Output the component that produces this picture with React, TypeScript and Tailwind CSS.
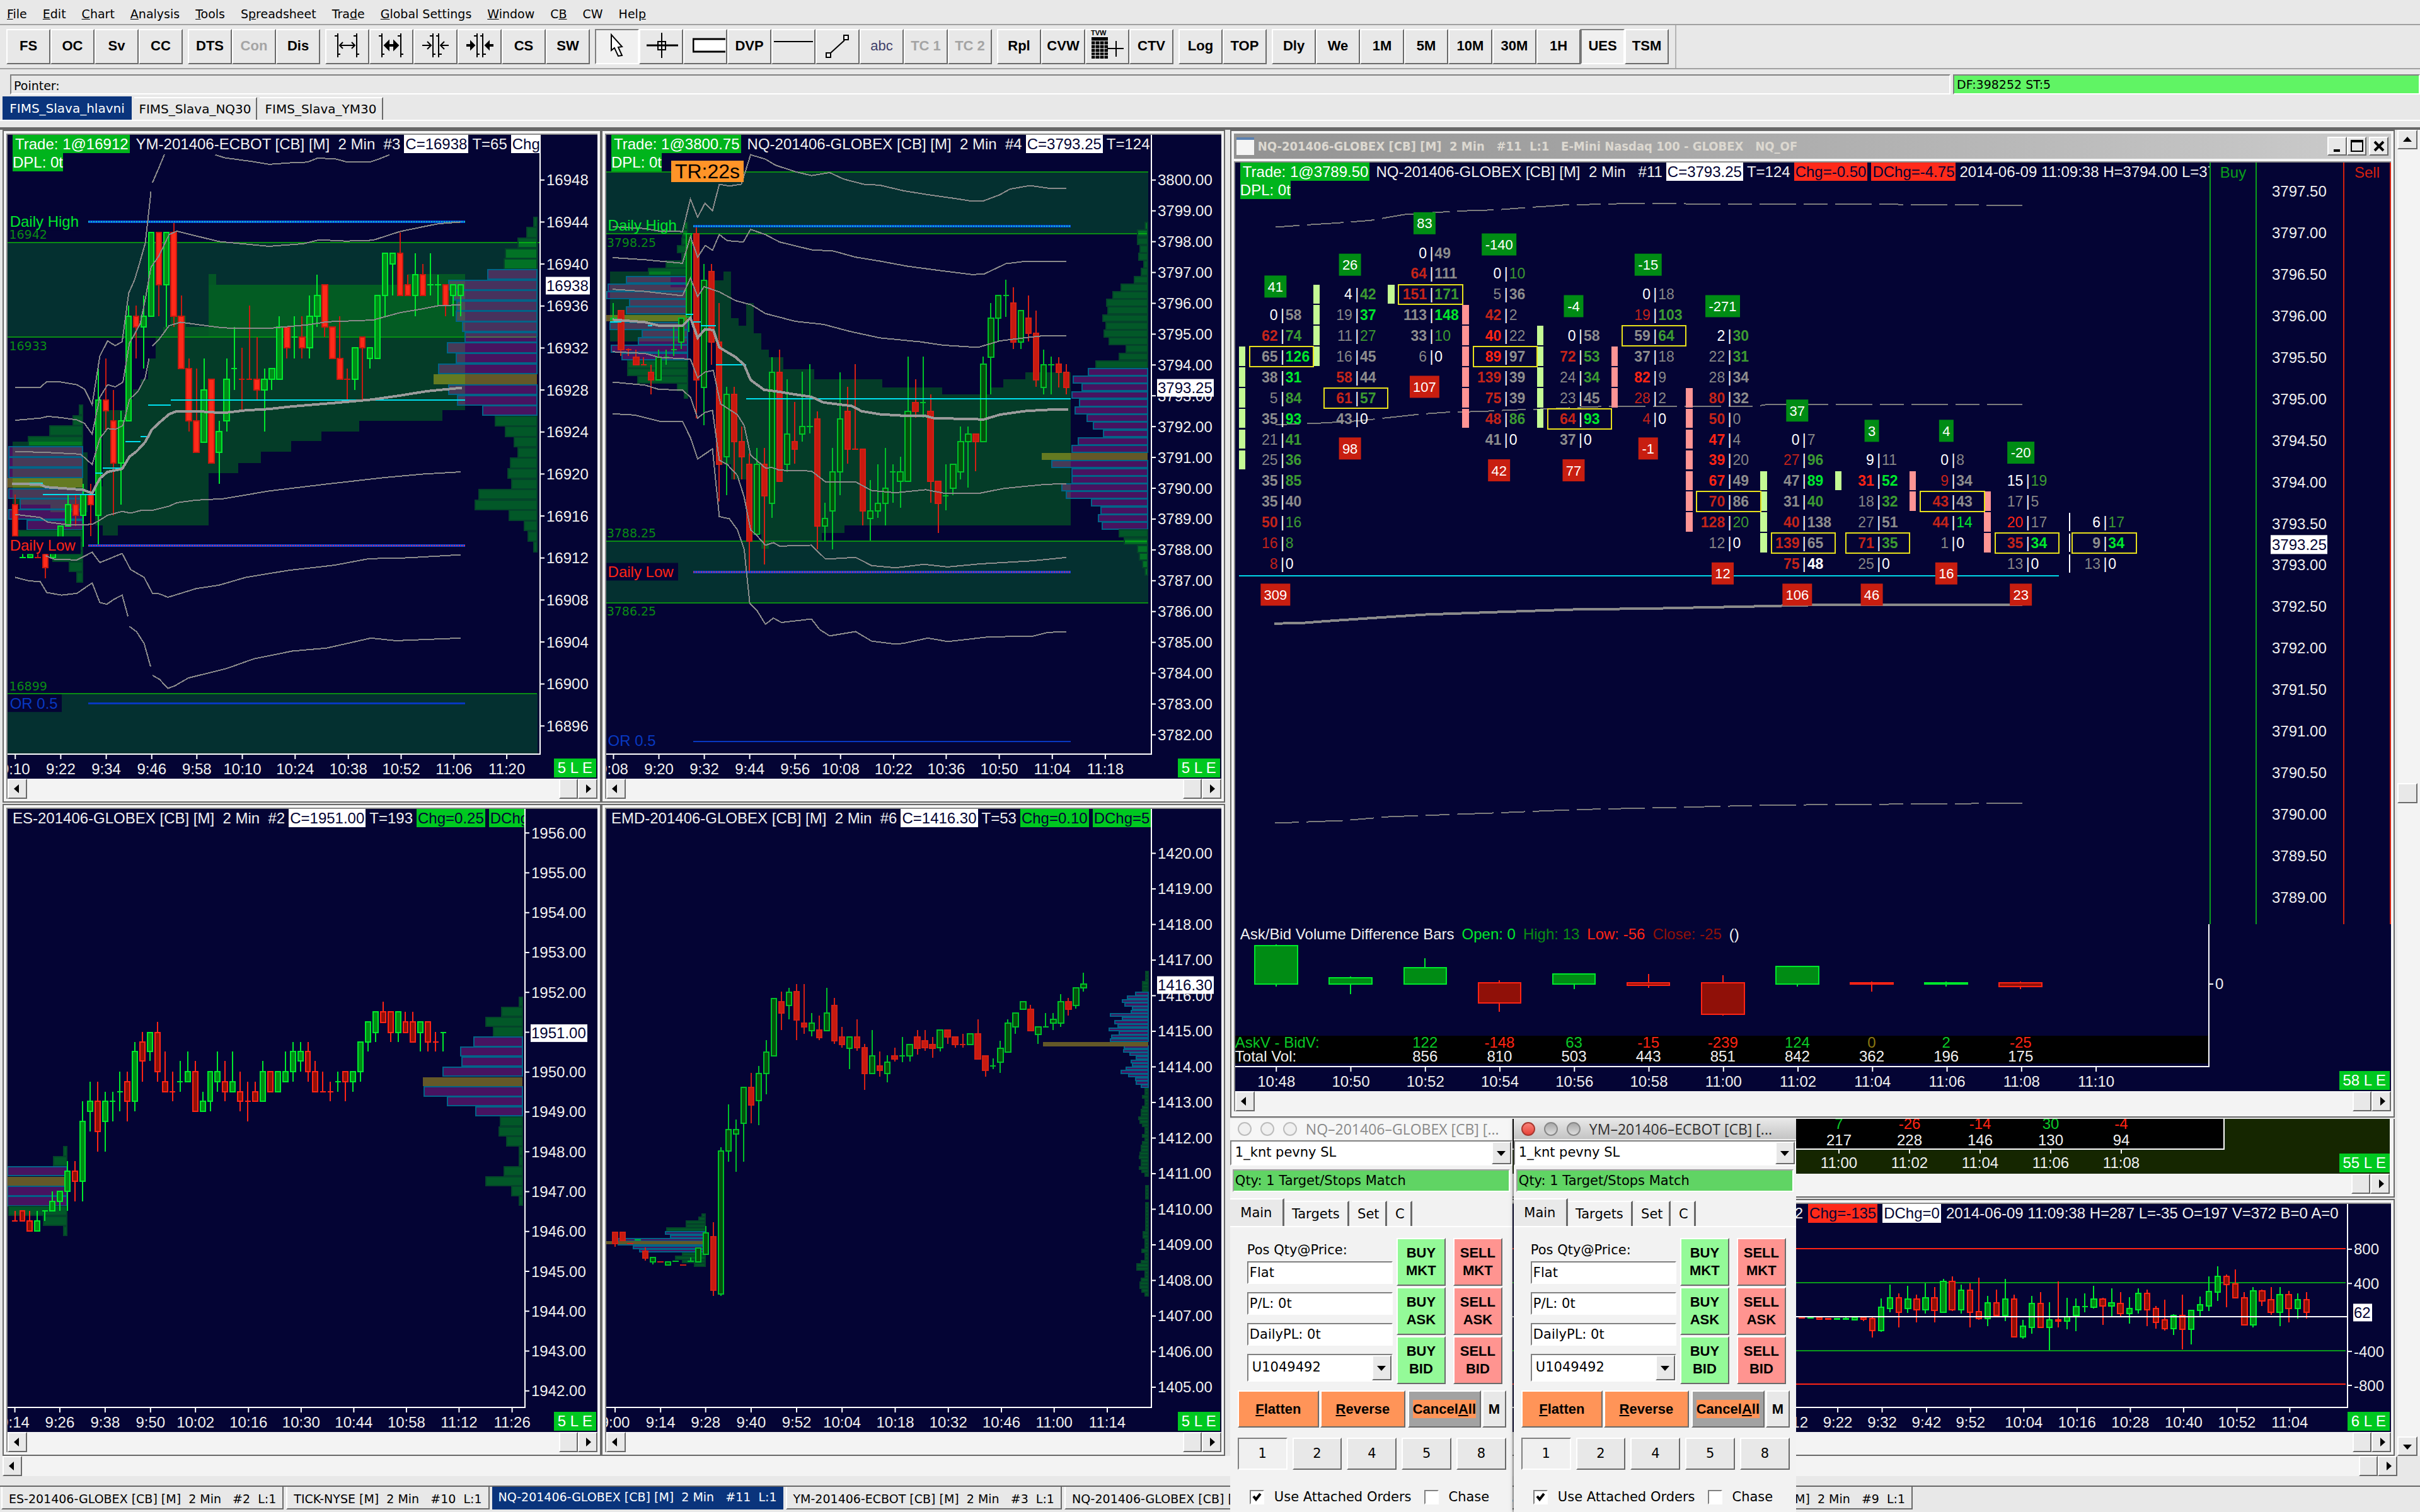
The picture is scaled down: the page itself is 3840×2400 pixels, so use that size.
import type { ReactNode } from "react";

type Box = [number, number, number, number];
type Candle = { dir: string; high: number; top: number; bottom: number; low: number };
type Label = [string, number];

const bevel = "border-2 border-t-white border-l-white border-r-[#6a6a6a] border-b-[#6a6a6a] bg-[#e8e8e8]";
const sunken = "border-2 border-t-[#808080] border-l-[#808080] border-r-white border-b-white";

const themes = {
	bright: { upFill: "#008c18", up: "#00e82c", downFill: "#ff2a1a", down: "#c81a10" },
	dark: { upFill: "#04500c", up: "#00c028", downFill: "#c81a10", down: "#d42014" },
	deep: { upFill: "#008c14", up: "#00e82c", downFill: "#901008", down: "#ff2414" },
};

function parse(data: string): Candle[] {
	return data
		.trim()
		.split(/[;\n]+/)
		.map((row) => {
			const [dir, high, top, bottom, low] = row.trim().split(/\s+/);
			return { dir, high: +high, top: +top, bottom: +bottom, low: +low };
		});
}

const series = (first: number, step: number, start: number, gap: number, count: number, digits: number): Label[] =>
	Array.from({ length: count }, (_, i) => [(first - i * step).toFixed(digits), start + i * gap]);

const pct = (v: number, start: number, span: number) => `${(((v - start) / span) * 100).toFixed(3)}%`;

/* ---------- data ---------- */

const ymCandles = parse(`d 18 17 14 14; u 13 12 12 12; u 13 12.3 12 12; d 13 12 12 12; d 12.4 12.4 11 10; u 13 12.4 12 12
u 15 15 13 13; u 18 17 15 15; d 18 17 16 15; u 19 18 16 13; d 19 18 17 14; u 30 27 16 13; d 31 27 26 24; d 28 25 21 16
u 26 25 21 17; u 36 35 25 25; d 36 35 34 31; u 37 35 34 30; u 43 43 35 35; d 43 43 38 35; u 43 43 38 34; d 44 43 35 34
d 37 35 30 30; d 31 30 25 24; d 30 25 22 22; u 31 28 23 23; d 29 29 21 21; u 25 24 22 19; u 31 29 25 24; u 34 30 30 28
d 32 29 29 26; d 36 29 29 29; d 33 29 28 27; u 30 29 28 24; u 30 30 29 28; u 35 34 29 29; d 34 34 32 31; u 35 33 33 31
d 35 33 32 31; u 37 35 32 31; u 39 37 35 34; d 38 38 34 33; d 34 34 31 31; d 35 31 29 29; d 30 29 29 27; u 32 32 29 28
d 33 33 32 27; u 32 32 31 30; u 37 37 31 31; u 41 41 37 35; u 41 41 40 37; d 43 41 37 37; d 39 38 37 37; u 41 39 37 35
d 40 39 37 37; u 41 38 38 37; u 39 38 38 36; d 38 38 36 35; u 38 38 37 35; u 38 38 37 35`);

const nqCandles = parse(`u 407 442 446 446; d 425 425 515 530; d 513 515 515 530; d 515 532 550 550; d 533 550 550 552
d 550 567 585 618; u 515 532 585 585; u 515 532 532 550; u 462 515 515 530; u 442 442 498 514; u 248 248 440 475
d 230 248 585 673; u 317 355 602 690; d 317 335 498 550; d 407 498 780 865; u 601 619 762 850; d 601 619 727 815
d 692 727 762 815; d 755 780 956 1027; u 742 780 940 940; d 742 780 852 1010; u 532 567 869 903; d 515 567 818 818
u 584 710 780 797; d 636 727 745 778; u 566 692 710 727; u 549 692 692 709; d 657 675 922 975; u 868 905 922 955
u 742 797 887 975; u 567 675 797 850; d 601 657 745 778; d 549 745 745 746; d 745 745 887 920; u 816 887 905 955
u 780 869 887 903; u 742 834 869 920; u 780 797 797 868; u 762 797 818 880; u 531 657 818 818; d 584 637 657 672
u 531 637 637 672; d 619 657 818 868; d 818 818 869 938; u 780 852 852 885; u 780 780 834 850; u 692 727 797 815
u 692 710 727 833; d 710 710 727 796; u 531 549 727 727; u 407 442 532 618; u 390 390 442 498; u 354 390 390 440
d 372 407 498 514; u 425 425 498 514; d 390 442 478 497; d 425 478 585 601; u 515 550 602 618; u 531 550 550 618
d 532 549 567 602; d 549 567 602 618`);

const esCandles = parse(`d 906 928 928 928; d 906 906 928 928; d 906 928 950 950; u 906 928 950 950; u 906 906 906 928
u 862 884 906 906; u 862 862 884 906; u 796 818 862 906; d 796 818 840 884; u 664 708 840 884; u 620 664 686 730
d 620 664 730 774; u 642 664 708 774; u 642 664 664 708; u 598 642 642 686; d 598 620 664 708; u 532 553 664 686
d 510 532 575 620; u 512 512 553 575; d 488 512 598 620; d 553 620 642 642; d 598 642 642 664; u 575 620 620 642
u 553 598 620 620; d 575 598 686 686; u 642 664 686 686; u 598 598 664 686; u 553 598 620 642; d 575 620 642 664
u 553 620 642 642; d 598 642 664 686; d 620 664 664 708; d 620 642 664 664; u 575 598 664 664; d 598 598 642 642
u 598 598 642 642; u 553 598 620 620; u 532 553 598 620; u 532 553 575 598; d 532 553 598 620; d 575 598 642 642
d 598 642 642 642; d 620 642 642 664; u 598 620 620 642; d 598 598 620 664; u 598 598 620 642; u 532 532 598 620
u 488 488 532 553; u 466 466 512 532; d 444 466 490 490; d 466 466 512 532; u 466 466 512 532; d 466 488 512 512
d 466 488 532 532; u 488 488 512 553; d 488 488 532 553; d 510 532 532 553; u 511 512 512 553`);

const emdCandles = parse(`d 955 955 980 987; d 955 955 973 973; d 980 980 980 980; u 972 972 972 972; d 988 997 1012 1018
u 1010 1011 1020 1026; d 1020 1020 1020 1020; u 1019 1020 1028 1028; u 1019 1019 1019 1019; d 1028 1028 1028 1028
u 1010 1019 1019 1020; u 988 989 1020 1020; u 941 956 1003 1003; d 933 964 1083 1095; u 766 775 1091 1095
u 672 728 775 798; u 705 728 737 821; u 634 634 714 798; d 602 634 673 713; u 587 603 664 718; u 530 556 603 649
u 437 437 564 564; d 422 445 470 507; u 414 423 453 483; d 405 422 485 530; d 405 492 500 516; u 470 492 509 521
d 475 508 524 530; u 414 470 509 509; d 436 453 531 538; d 500 523 540 547; u 523 523 548 594; d 483 523 547 554
d 538 547 603 640; u 508 564 603 603; d 555 587 596 610; u 563 578 603 623; d 547 564 571 577; u 523 564 564 578
u 538 540 564 577; d 508 523 548 562; d 508 531 547 554; d 523 540 548 569; u 508 508 547 555; d 508 508 523 538
d 523 523 540 547; d 516 539 539 546; u 516 516 540 540; d 484 516 571 571; d 564 564 596 610; u 570 587 587 594
u 531 548 578 602; u 484 492 556 556; u 470 470 500 516; u 445 445 462 462; d 452 462 509 509; u 500 500 517 538
u 470 500 500 500; u 470 484 492 507; u 428 445 492 500; d 436 445 461 475; u 414 414 453 460; u 380 406 414 422`);

const tickCandles = parse(`u 808 808 811 811; d 808 809 811 811; u 808 808 810 810; d 808 808 816 816; d 814 814 816 816
u 814 814 816 816; u 808 814 816 818; u 808 808 817 817; d 806 808 816 823; d 806 813 861 886; u 735 770 861 866
u 681 731 773 788; d 715 731 788 847; u 686 736 773 792; d 720 736 778 827; u 675 731 778 793; d 691 731 782 827
u 657 667 788 788; d 647 667 778 783; u 681 702 778 793; d 675 702 788 847; d 652 785 812 817; u 725 751 812 842
d 701 751 801 806; u 657 736 801 822; d 720 736 885 885; u 818 844 885 891; u 725 755 847 872; d 710 755 847 847
u 750 819 847 937; d 667 819 822 847; u 731 806 822 856; u 735 766 801 862; u 715 766 766 788; u 686 736 768 773
d 731 736 763 838; u 696 751 763 803; d 710 755 793 803; u 730 774 793 833; u 696 715 778 793; d 701 715 778 842
d 764 774 827 852; d 740 818 852 861; u 795 800 852 877; d 720 800 856 935; u 780 780 856 915; u 726 760 782 805
u 647 707 763 783; u 608 648 710 745; d 642 648 680 769; d 622 677 733 733; d 710 731 837 837; u 691 706 837 847
d 701 706 744 763; d 691 740 788 798; u 691 720 788 842; d 706 720 773 827; u 715 740 773 812; d 710 740 788 812`);

const deltaBars = parse(`u 174 180 366 378; u 330 336 366 414; u 240 288 366 366; d 348 360 456 498; u 318 318 366 390
d 318 360 372 384; d 324 360 510 516; u 276 282 366 378; d 354 360 366 402; u 354 360 366 378; d 354 360 378 390`);

/* bid and ask volume per price; the letter after a number picks its tone */
const footprint = [
	{ start: 6, box: 8, top: ["41", 495], bottom: ["309", 1454], rows: "0w 58G,62R 74E,65G 126B,38G 31B,5g 84E,35G 93B,21g 41E,25g 36E,35G 85E,35G 40G,50R 16e,16r 8e,8r 0w" },
	{ start: 5, box: 10, top: ["26", 427], bottom: ["98", 999], rows: "4w 42E,19g 37B,11g 27e,16g 45G,58R 44G,61R 57E,43G 0w" },
	{ start: 3, box: 5, top: ["83", 298], bottom: ["107", 807], rows: "0w 49G,64R 111G,151R 171E,113G 148B,33G 10e,6g 0w" },
	{ start: 4, box: 8, top: ["-140", 364], bottom: ["42", 1067], rows: "0w 10e,5g 36G,42R 2g,40X 22g,89X 97G,139R 39G,75R 39G,48R 86E,41G 0w" },
	{ start: 7, box: 11, top: ["-4", 556], bottom: ["77", 1067], rows: "0w 58G,72R 53E,24g 34E,23g 45G,64R 93B,37G 0w" },
	{ start: 5, box: 7, top: ["-15", 427], bottom: ["-1", 999], rows: "0w 18g,19r 103E,59G 64E,37G 18g,82X 9g,28r 2g,4r 0w" },
	{ start: 7, box: 15, top: ["-271", 556], bottom: ["12", 1388], rows: "2w 30E,22g 31E,28g 34G,80R 32G,50R 0g,47X 4g,39X 20g,67X 49G,70R 86G,128R 20e,12g 0w" },
	{ start: 12, box: 17, top: ["37", 881], bottom: ["106", 1454], rows: "0w 7g,27r 96E,47G 89B,31G 40E,40R 138G,139R 65G,75R 48W" },
	{ start: 13, box: 17, top: ["3", 944], bottom: ["46", 1454], rows: "9w 11g,31X 52B,18g 32E,27g 51G,71R 35E,25g 0w" },
	{ start: 13, box: 15, top: ["4", 944], bottom: ["16", 1388], rows: "0w 8g,9r 34G,43R 43G,44R 14b,1g 0w" },
	{ start: 14, box: 17, top: ["-20", 1012], bottom: ["23", 1454], rows: "15w 19e,17g 5g,20x 17g,35R 34B,13g 0w" },
	{ start: 16, box: 17, top: null, bottom: null, rows: "6w 17e,9G 34B,13g 0w" },
] as { start: number; box: number; top: Label | null; bottom: Label | null; rows: string }[];

const toneFill: Record<string, string> = {
	w: "#ffffff", W: "#ffffff", g: "#868686", G: "#8c8c8c", r: "#c0221a", R: "#c4241a",
	x: "#ff2414", X: "#ff2414", e: "#3c9a32", E: "#3c9a32", b: "#00e82c", B: "#00e82c",
};

/* first row, last row, colour of the strip left of each footprint column */
const strips: [number, number, string][] = [
	[8, 13, "#c4fa94"], [5, 8, "#c4fa94"], [5, 5, "#c4fa94"], [6, 11, "#ff9494"], [7, 11, "#c4fa94"], [8, 10, "#ff9494"],
	[10, 16, "#ff9494"], [14, 17, "#c4fa94"], [14, 14, "#c4fa94"], [14, 15, "#ff9494"], [15, 17, "#ff9494"],
];

/* ---------- chart pieces ---------- */

function Candles({ data, x0, dx, width, theme, y = (v) => v }: {
	data: Candle[];
	x0: number;
	dx: number;
	width: number;
	theme: keyof typeof themes;
	y?: (v: number) => number;
}) {
	const t = themes[theme];
	return (
		<g>
			{data.map((c, i) => {
				const x = x0 + dx * i;
				const stroke = c.dir === "u" ? t.up : t.down;
				const h = y(c.bottom) - y(c.top);
				return (
					<g key={i} stroke={stroke} strokeWidth="2">
						<line x1={x} x2={x} y1={y(c.high)} y2={y(c.low)} vectorEffect="non-scaling-stroke" />
						{h < 1 ? (
							<line x1={x - width / 2 - 1} x2={x + width / 2 + 1} y1={y(c.top)} y2={y(c.top)} vectorEffect="non-scaling-stroke" />
						) : (
							<rect x={x - width / 2} y={y(c.top)} width={width} height={h} fill={c.dir === "u" ? t.upFill : t.downFill} vectorEffect="non-scaling-stroke" />
						)}
					</g>
				);
			})}
		</g>
	);
}

/* rows are left edges; p = value area, o = point of control, g = outside */
function Profile({ rows, right, y0, dy }: { rows: string; right: number; y0: number; dy: number }) {
	const paint: Record<string, [string, number, string]> = {
		p: ["#e639c6", 0.3, "#006488"],
		o: ["#f4d616", 0.4, "none"],
		g: ["#00d616", 0.4, "#04442a"],
	};
	return (
		<g>
			{rows.split(" ").map((row, i) => {
				const [fill, alpha, stroke] = paint[row[0]];
				const left = +row.slice(1);
				return (
					<rect key={i} x={left} y={y0 + dy * i - dy / 2 + 1} width={right - left} height={dy - 2} fill={fill} fillOpacity={alpha} stroke={stroke} strokeWidth="2" vectorEffect="non-scaling-stroke" />
				);
			})}
		</g>
	);
}

function Lines({ paths, stroke, width = 2, dash }: { paths: string[]; stroke: string; width?: number; dash?: string }) {
	return (
		<g fill="none" stroke={stroke} strokeWidth={width} strokeDasharray={dash}>
			{paths.map((p) => (
				<polyline key={p} points={p} vectorEffect="non-scaling-stroke" />
			))}
		</g>
	);
}

function DayLine({ x1, x2, y, dots }: { x1: number; x2: number; y: number; dots: string }) {
	return (
		<g>
			<Lines paths={[`${x1},${y} ${x2},${y}`]} stroke="#0848e0" width={4} />
			<Lines paths={[`${x1},${y} ${x2},${y}`]} stroke={dots} width={2} dash="2 2" />
		</g>
	);
}

function Drawing({ box, children }: { box: Box; children: ReactNode }) {
	return (
		<svg className="absolute inset-0 h-full w-full" viewBox={box.join(" ")} preserveAspectRatio="none" shapeRendering="crispEdges">
			{children}
		</svg>
	);
}

function Note({ box, x, y, color, text, small, back }: { box: Box; x: number; y: number; color: string; text: string; small?: boolean; back?: number }) {
	const top = pct(y, box[1], box[3]);
	return (
		<g>
			{back && <rect x="0" y={top} width={back} height="28" fill="#040434" className="-translate-y-3.5" />}
			<text x={pct(x, box[0], box[2])} y={top} fill={color} dominantBaseline="central" className={small ? "font-['DejaVu_Sans',sans-serif] text-[19px]" : "text-2xl"}>
				{text}
			</text>
		</g>
	);
}

function PriceAxis({ box, labels, last, className }: { box: Box; labels: Label[]; last?: Label; className: string }) {
	return (
		<svg className={`h-full shrink-0 ${className}`}>
			{labels.map(([text, y]) => (
				<g key={text}>
					<line x1="0" x2="6" y1={pct(y, box[1], box[3])} y2={pct(y, box[1], box[3])} stroke="#fff" strokeWidth="2" />
					<text x="9" y={pct(y, box[1], box[3])} fill="#f0f0f0" dominantBaseline="central" className="text-2xl">
						{text}
					</text>
				</g>
			))}
			{last && (
				<g>
					<rect x="8" y={pct(last[1], box[1], box[3])} width={last[0].length === 5 ? 70 : last[0].length < 4 ? 30 : 90} height="28" fill="#fff" className="-translate-y-3.5" />
					<text x="9" y={pct(last[1], box[1], box[3])} fill="#040434" dominantBaseline="central" className="text-2xl">
						{last[0]}
					</text>
				</g>
			)}
		</svg>
	);
}

function TimeAxis({ box, labels, badge, axis }: { box: Box; labels: Label[]; badge: string; axis: string }) {
	return (
		<div className="relative flex h-[38px] shrink-0 overflow-hidden">
			<svg className="h-full min-w-0 flex-1 overflow-visible">
				{labels.map(([text, x]) => (
					<g key={text}>
						<line x1={pct(x, box[0], box[2])} x2={pct(x, box[0], box[2])} y1="0" y2="7" stroke="#fff" strokeWidth="2" />
						<text x={pct(x, box[0], box[2])} y="22" fill="#f0f0f0" textAnchor="middle" dominantBaseline="central" className="text-2xl">
							{text}
						</text>
					</g>
				))}
			</svg>
			<div className={`flex shrink-0 items-center justify-end pr-0.5 pt-1 ${axis}`}>
				<span className="z-10 bg-[#00c820] px-1.5 text-2xl leading-[30px] whitespace-nowrap text-white">{badge}</span>
			</div>
		</div>
	);
}

function Arrow({ dir }: { dir: "left" | "right" | "up" | "down" }) {
	const d = { left: "M9 0 L1 7 L9 14 Z", right: "M5 0 L13 7 L5 14 Z", up: "M0 10 L7 2 L14 10 Z", down: "M0 4 L7 12 L14 4 Z" }[dir];
	return (
		<svg width="14" height="14" className="m-auto">
			<path d={d} fill="#000" />
		</svg>
	);
}

function HScroll() {
	return (
		<div className="flex h-8 shrink-0 bg-[#f3f3f3]">
			<button aria-label="Scroll left" className={`w-[31px] ${bevel}`}><Arrow dir="left" /></button>
			<div className="flex-1" />
			<div className={`w-[30px] ${bevel}`} />
			<button aria-label="Scroll right" className={`w-[31px] ${bevel}`}><Arrow dir="right" /></button>
		</div>
	);
}

function Frame({ title, children }: { title?: ReactNode; children: ReactNode }) {
	return (
		<section className={`flex min-h-0 min-w-0 flex-col overflow-hidden border-2 border-[#686868] bg-[#f4f4f4] px-1 pt-1 ${title ? "pb-2" : "pb-1"}`}>
			{title}
			<div className="flex min-h-0 flex-1 flex-col border-t-2 border-l-2 border-[#8a8a8a]">{children}</div>
		</section>
	);
}

function Chip({ tone, children }: { tone: string; children: ReactNode }) {
	return <span className={`shrink-0 px-0.5 ${tone}`}>{children}</span>;
}

const green = "bg-[#00b41c] text-white";
const lime = "bg-[#00c820] text-[#040434]";
const white = "bg-white text-[#040434]";
const red = "bg-[#ff2a1a] text-[#040434]";

function ChartHead({ trade, children }: { trade?: string; children: ReactNode }) {
	return (
		<div className="absolute inset-x-0 top-0 overflow-hidden text-2xl leading-[29px] whitespace-pre text-[#f0f0f0]">
			<div className="flex gap-1.5 bg-[#040434] pl-2">
				{trade && <span className={`mr-1 shrink-0 pr-0.5 pl-1 ${green}`}>{trade}</span>}
				{children}
			</div>
			{trade && <span className={`ml-2 inline-block ${green}`}>DPL: 0t</span>}
		</div>
	);
}

function Chart({ box, head, drawing, notes, prices, last, times, badge, axis, children }: {
	box: Box;
	head: ReactNode;
	drawing: ReactNode;
	notes?: ReactNode;
	prices: Label[];
	last: Label;
	times: Label[];
	badge: string;
	axis: string;
	children?: ReactNode;
}) {
	return (
		<Frame>
			<div className="flex min-h-0 flex-1 flex-col bg-[#040434]">
				<div className="flex min-h-0 flex-1">
					<div className="relative min-w-0 flex-1 border-r-2 border-b-2 border-white">
						<Drawing box={box}>{drawing}</Drawing>
						<svg className="absolute inset-0 h-full w-full">{notes}</svg>
						{head}
						{children}
					</div>
					<PriceAxis box={box} labels={prices} last={last} className={axis} />
				</div>
				<TimeAxis box={box} labels={times} badge={badge} axis={axis} />
			</div>
			<HScroll />
		</Frame>
	);
}

/* ---------- the four charts on the left ---------- */

function YmChart() {
	const box: Box = [20, 20, 1383, 1426];
	return (
		<Chart
			box={box}
			axis="w-[90px]"
			badge="5 L E"
			prices={series(16948, 4, 124, 96.6, 14, 0)}
			last={["16938", 367]}
			times={[["9:10", 40], ["9:22", 158], ["9:34", 276], ["9:46", 394], ["9:58", 511], ["10:10", 629], ["10:24", 766], ["10:38", 904], ["10:52", 1041], ["11:06", 1178], ["11:20", 1315]]}
			head={
				<ChartHead trade="Trade: 1@16912">
					<span>YM-201406-ECBOT [CB] [M]  2 Min  #3</span>
					<Chip tone={white}>C=16938</Chip>
					<span>T=65</span>
					<Chip tone={white}>Chg</Chip>
				</ChartHead>
			}
			drawing={
				<>
					<rect x="20" y="268" width="1380" height="218" fill="#043030" />
					<rect x="20" y="1308" width="1378" height="140" fill="#043030" />
					<Lines paths={["20,268 1403,268", "20,486 1397,486", "20,1308 1397,1308"]} stroke="#0a8c14" />
					<g fill="#049016" fillOpacity="0.4">
						<path d="M33 727H215V752H228V890H131V872H33Z" />
						<path d="M248 830H268V655H327V630H346V607H366V583H386V535H405V487H425V463H444V437H483V463H542V341H562V366H1060V341H1209V654H1150V679H934V704H836V726H757V750H679V776H620V800H542V920H307V944H268V920H248Z" />
						<path d="M542 366H1209V487H542Z" fillOpacity="0.1" />
					</g>
					<Profile rows="g207 g190 g129 g74 p24 p24 p24 o20 p24 p52 p24 p70 g50 g60 g138 g181 g200" right={215} y0={654} dy={24.1} />
					<Profile rows="g1389 g1370 g1348 g1314 g1311 p1268 p1167 p1180 p1189 p1187 p1203 p1210 p1164 p1187 p1141 o1128 p1167 p1190 p1255 g1288 g1315 g1338 g1348 g1328 g1321 g1331 g1246 g1236 g1324 g1364 g1373 g1389" right={1397} y0={221} dy={24.15} />
					<Candles data={ymCandles} x0={40} dx={19.63} width={14} theme="bright" y={(v) => 221 + (44 - v) * 24.15} />
					<DayLine x1={229} x2={1209} y={221} dots="#10d0b0" />
					<DayLine x1={229} x2={1209} y={967} dots="#e02850" />
					<Lines paths={["229,1331 1209,1331"]} stroke="#0838c0" width={3} />
					<Lines stroke="#00e0f0" width={2} paths={["32,823 111,823", "111,849 248,849", "248,800 268,800", "268,788 318,788", "327,727 366,727", "366,715 385,715", "385,643 444,643", "444,631 1209,631"]} />
					<Lines
						stroke="#8a8a8a"
						paths={[
							"40,602 105,602 122,589 160,590 200,596 220,606 240,642 260,530 280,495 300,506 318,497 335,385 350,355 362,320 378,270 385,215 393,150",
							"397,130 413,97 428,65",
							"560,66 585,73 660,82 700,88 765,84 800,83 825,74 870,75 900,82 965,82 985,76 1013,66",
							"40,678 105,673 125,669 160,672 200,677 220,685 240,710 260,625 280,596 300,601 320,590 337,500 350,480 365,455 378,400 393,325 413,300 440,250 460,242 510,253 570,266 700,277 790,271 830,262 900,265 970,263 1040,243 1100,232 1140,225 1198,221",
							"40,750 120,752 210,756 240,780 260,720 280,697 300,699 320,690 337,630 360,610 378,580 388,535",
							"397,507 415,490 440,460 470,452 520,458 580,465 700,466 800,458 850,451 970,447 1040,430 1100,421 1140,414 1198,412",
							"40,895 105,902 125,913 180,919 240,918 260,908 280,897 318,888 340,892 370,885 395,886 440,876 460,868 510,862 580,859 700,841 850,825 1000,810 1100,802 1198,797",
							"119,990 140,998 200,1000 240,982 260,1006 318,985 340,1022 375,1040 397,1077 415,1078 437,1086 510,1066 570,1058 640,1040 750,1024 870,1012 960,997 1060,995 1198,988",
							"40,1040 75,1048 105,1050 122,1075 160,1081 200,1077 240,1053 260,1098 278,1102 298,1090 318,1081 333,1130",
							"337,1153 355,1165 375,1192 392,1246",
							"397,1266 415,1275 437,1296 455,1290 490,1272 590,1250 660,1228 760,1210 850,1203 965,1180 1030,1186 1198,1180",
						]}
					/>
					<Lines stroke="#9a9a9a" width={4} paths={["32,824 105,826 120,832 215,838 240,846 260,812 280,797 318,790 337,762 355,750 378,728 395,700 410,687 440,664 460,657 510,657 580,661 640,655 700,652 760,646 870,638 970,630 1040,621 1110,611 1202,603"]} />
				</>
			}
			notes={
				<>
					<Note box={box} x={24} y={250} color="#0a8c14" text="16942" small />
					<Note box={box} x={24} y={506} color="#0a8c14" text="16933" small />
					<Note box={box} x={24} y={1290} color="#0a8c14" text="16899" small />
					<Note box={box} x={26} y={219} color="#00e82c" text="Daily High" back={116} />
					<Note box={box} x={26} y={966} color="#ff2414" text="Daily Low" back={116} />
					<Note box={box} x={26} y={1330} color="#0838c0" text="OR 0.5" back={86} />
				</>
			}
		/>
	);
}

function NqChart() {
	const box: Box = [18, 20, 1358, 1426];
	return (
		<Chart
			box={box}
			axis="w-[110px]"
			badge="5 L E"
			prices={series(3800, 1, 124, 70.9, 19, 2)}
			last={["3793.25", 602]}
			times={[["9:08", 36], ["9:20", 149], ["9:32", 262], ["9:44", 375], ["9:56", 488], ["10:08", 601], ["10:22", 733], ["10:36", 864], ["10:50", 996], ["11:04", 1128], ["11:18", 1260]]}
			head={
				<ChartHead trade="Trade: 1@3800.75">
					<span>NQ-201406-GLOBEX [CB] [M]  2 Min  #4</span>
					<Chip tone={white}>C=3793.25</Chip>
					<span>T=124</span>
				</ChartHead>
			}
			drawing={
				<>
					<rect x="18" y="106" width="1352" height="142" fill="#043030" />
					<rect x="18" y="956" width="1352" height="143" fill="#043030" />
					<Lines paths={["18,106 1370,106", "18,248 1370,248", "18,956 1370,956", "18,1099 1370,1099"]} stroke="#0a8c14" />
					<g fill="#049016" fillOpacity="0.4">
						<path d="M28 335H178V372H221V497H28Z" />
						<path d="M254 355H310V335H329V442H348V460H367V407H386V478H404V515H423V532H460V560H536V584H706V602H856V619H977V602H1008V584H1064V567H1176V920H612V938H555V956H423V974H404V940H367V815H329V780H300V498H254Z" />
					</g>
					<Profile rows="g213 g208 g207 g196 g206 g168 g124 p69 p22 p20 p76 p69 o18 p28 p108 p98 p30 p57 g71 g71 g96 g196 g213" right={221} y0={230} dy={17.72} />
					<Profile rows="g1362 g1343 g1343 g1349 g1347 g1359 g1353 g1335 g1302 g1282 g1266 g1270 g1256 g1265 g1260 g1272 g1315 g1297 g1240 p1221 p1183 p1205 p1180 p1199 p1187 p1218 p1233 p1258 p1195 p1180 o1104 p1130 p1180 p1180 p1155 p1165 p1228 p1252 p1246 p1255 g1297 g1310 g1343 g1348 g1356 g1362" right={1369} y0={230} dy={17.72} />
					<Candles data={nqCandles} x0={36} dx={18.83} width={13} theme="dark" />
					<DayLine x1={235} x2={1176} y={230} dots="#10d0b0" />
					<DayLine x1={235} x2={1176} y={1028} dots="#e02850" />
					<Lines paths={["235,1418 1176,1418"]} stroke="#0838c0" />
					<Lines stroke="#00e0f0" paths={["28,451 56,451", "122,460 132,460", "216,434 235,434", "235,451 254,451", "254,460 292,460", "292,550 367,550", "367,628 1176,628"]} />
					<Lines
						stroke="#8a8a8a"
						paths={[
							"34,232 115,236 150,242 208,243 228,168 246,210 264,178 283,195 300,134 325,138 355,134 378,66 415,76 440,90 490,105 530,114 575,107 610,122 660,134 700,136 760,149 820,158 890,167 930,173 960,172 1000,158 1025,145 1075,137 1120,143 1166,143",
							"34,303 115,308 208,316 228,255 246,302 265,275 283,286 300,250 320,264 360,267 378,238 415,250 450,267 530,285 585,288 640,302 700,311 770,323 860,334 930,342 960,341 1015,317 1060,312 1166,312",
							"34,376 115,381 208,391 228,350 246,393 262,370 300,382 340,402 380,412 415,432 490,450 560,457 625,473 700,488 800,497 860,505 945,510 1000,495 1060,488 1110,483 1166,483",
							"34,520 115,524 150,533 228,537 246,580 264,567 285,563 303,640 320,650 345,665 362,690 378,758 415,788 432,787 450,793 530,795 565,820 640,820 680,840 740,845 815,838 860,846 950,846 1010,835 1110,826 1166,824",
							"34,590 115,597 150,607 208,608 228,625 246,673 264,660 283,655 300,770 320,780 345,805 362,855 378,930 395,945 415,966 435,960 450,968 530,966 565,998 640,994 680,1013 740,1018 810,1010 870,1016 950,1009 1080,1002 1166,994",
							"34,663 90,666 150,680 208,680 228,718 246,767 283,744 300,900 325,905 345,930 362,975 376,1100 395,1118 415,1148 435,1134 455,1144 530,1136 550,1160 575,1175 640,1165 680,1187 740,1194 760,1192 820,1180 870,1188 975,1177 1080,1176 1120,1167 1166,1165",
						]}
					/>
					<Lines stroke="#9a9a9a" width={4} paths={["34,446 115,452 150,460 208,460 228,442 246,488 264,468 285,470 300,510 340,532 362,550 378,585 412,608 440,611 500,620 530,624 560,637 630,645 655,657 700,664 770,668 810,667 835,673 960,676 1000,665 1060,657 1110,654 1170,653"]} />
				</>
			}
			notes={
				<>
					<Note box={box} x={22} y={229} color="#00e82c" text="Daily High" />
					<Note box={box} x={19} y={268} color="#0a8c14" text="3798.25" small />
					<Note box={box} x={19} y={938} color="#0a8c14" text="3788.25" small />
					<Note box={box} x={22} y={1027} color="#ff2414" text="Daily Low" back={114} />
					<Note box={box} x={19} y={1118} color="#0a8c14" text="3786.25" small />
					<Note box={box} x={22} y={1416} color="#0838c0" text="OR 0.5" />
				</>
			}
		>
			<span className="absolute top-[41px] left-[103px] bg-[#ff9428] px-1.5 text-[32px] leading-[34px] text-black">TR:22s</span>
		</Chart>
	);
}

function EsChart() {
	const box: Box = [15, 18, 1348, 1320];
	return (
		<Chart
			box={box}
			axis="w-[114px]"
			badge="5 L E"
			prices={series(1956, 1, 71, 87.8, 15, 2)}
			last={["1951.00", 512]}
			times={[["9:14", 34], ["9:26", 151], ["9:38", 269], ["9:50", 387], ["10:02", 504], ["10:16", 642], ["10:30", 779], ["10:44", 916], ["10:58", 1053], ["11:12", 1190], ["11:26", 1328]]}
			head={
				<ChartHead>
					<span>ES-201406-GLOBEX [CB] [M]  2 Min  #2</span>
					<Chip tone={white}>C=1951.00</Chip>
					<span>T=193</span>
					<Chip tone={lime}>Chg=0.25</Chip>
					<Chip tone={lime}>DChg=4.50</Chip>
				</ChartHead>
			}
			drawing={
				<>
					<Profile rows="g161 g135 p15 o15 p15 p15 g18 g108 g161" right={169} y0={774} dy={21.95} />
					<Profile rows="g1350 g1304 g1262 g1282 p1232 p1197 p1200 p1151 o1098 p1102 p1163 p1236 g1300 g1298 g1317 g1350 g1350 g1311 g1262 g1331 g1350" right={1358} y0={444} dy={21.98} />
					<Candles data={esCandles} x0={34} dx={19.6} width={13} theme="deep" />
				</>
			}
		/>
	);
}

function EmdChart() {
	const box: Box = [20, 18, 1356, 1323];
	return (
		<Chart
			box={box}
			axis="w-[110px]"
			badge="5 L E"
			prices={series(1420, 1, 116, 78.6, 16, 2)}
			last={["1416.30", 407]}
			times={[["9:00", 42], ["9:14", 155], ["9:28", 267], ["9:40", 380], ["9:52", 493], ["10:04", 606], ["10:18", 738], ["10:32", 870], ["10:46", 1002], ["11:00", 1133], ["11:14", 1265]]}
			head={
				<ChartHead>
					<span>EMD-201406-GLOBEX [CB] [M]  2 Min  #6</span>
					<Chip tone={white}>C=1416.30</Chip>
					<span>T=53</span>
					<Chip tone={lime}>Chg=0.10</Chip>
					<Chip tone={lime}>DChg=5.20</Chip>
				</ChartHead>
			}
			drawing={
				<>
					<Profile rows="g258 g250 g220 g220 g170 p167 p180 p50 p50 p88 p103 g210 g192 g210 g240" right={266} y0={917} dy={7.86} />
					<Profile rows="g1363 g1363 g1363 g1356 g1356 g1356 p1338 p1318 p1305 p1312 p1330 p1328 p1276 p1305 p1287 p1295 p1273 p1297 p1279 p1276 o1107 p1310 p1308 p1325 p1340 p1328 p1330 p1315 p1302 p1322 p1338 p1340 p1352 g1362 g1362 g1356 g1362 g1362 g1356 g1353 g1352 g1347 g1350 g1356 g1362 g1362 g1356 g1362 g1356 g1352 g1353 g1350 g1348 g1352 g1353 g1348 g1354 g1362" right={1370} y0={380} dy={7.86} />
					<Profile rows="g1363 g1363 g1363 g1363" right={1370} y0={854} dy={7.86} />
					<Profile rows="g1363 g1363 g1363 g1363 g1363 g1363 g1363 g1363 g1358 g1358 g1362 g1362 g1362 g1355 g1362 g1362 g1352 g1341 g1341 g1362 g1362 g1352 g1350 g1350 g1355 g1362" right={1370} y0={892} dy={8} />
					<rect x="20" y="974" width="246" height="8" fill="#645828" />
					<rect x="1107" y="536" width="263" height="8" fill="#645828" />
					<Candles data={emdCandles} x0={42} dx={18.82} width={13} theme="dark" />
				</>
			}
		/>
	);
}

/* ---------- right column ---------- */

const flow: Box = [20, 110, 2519, 2371];
const deltaBox: Box = [10, 77, 1280, 683];
const colX = (i: number) => (i === 11 ? 2269 : 142 + 192.7 * i);
const rowY = (r: number) => 200 + 64.5 * r;

function DeltaTag({ x, tag, color }: { x: number; tag: Label; color: string }) {
	const w = tag[0].replace("-", "").length * 12 + (tag[0][0] === "-" ? 8 : 0) + 11;
	const left = pct(x, flow[0], flow[2]);
	const top = pct(tag[1], flow[1], flow[3]);
	return (
		<svg x={left} y={top} className="overflow-visible">
			<rect x={-w / 2} y="-17" width={w} height="35" fill={color} />
			<text y="1" fill="#fff" textAnchor="middle" dominantBaseline="central" className="text-[22px]">
				{tag[0]}
			</text>
		</svg>
	);
}

function FlowNumbers() {
	return (
		<svg className="absolute inset-0 h-full w-full text-[23px]">
			{footprint.map((col, i) => (
				<g key={i} dominantBaseline="central">
					{col.rows.split(",").map((row, r) => {
						const [bid, ask] = row.split(" ");
						const y = pct(rowY(col.start + r) - 2, flow[1], flow[3]);
						const weight = (s: string) => (/[GREBWX]$/.test(s) ? "font-bold" : "");
						return (
							<g key={r}>
								<text x={pct(colX(i) - 12, flow[0], flow[2])} y={y} textAnchor="end" fill={toneFill[bid.slice(-1)]} className={weight(bid)}>
									{bid.slice(0, -1)}
								</text>
								<text x={pct(colX(i), flow[0], flow[2])} y={y} textAnchor="middle" fill="#fff">|</text>
								<text x={pct(colX(i) + 8, flow[0], flow[2])} y={y} fill={toneFill[ask.slice(-1)]} className={weight(ask)}>
									{ask.slice(0, -1)}
								</text>
							</g>
						);
					})}
					{col.top && <DeltaTag x={colX(i) - 18} tag={col.top} color="#008c14" />}
					{col.bottom && <DeltaTag x={colX(i) - 18} tag={col.bottom} color="#c81e10" />}
				</g>
			))}
		</svg>
	);
}

function WindowTitle() {
	const btn = `flex h-[30px] w-[31px] items-center justify-center ${bevel}`;
	return (
		<header className="mb-1 flex h-10 shrink-0 items-center bg-gradient-to-r from-[#929292] to-[#cccccc] px-1">
			<svg width="28" height="28">
				<rect width="28" height="28" fill="#f4f4f4" />
				<rect width="28" height="4" fill="#5a80b0" />
			</svg>
			<h2 className="flex-1 overflow-hidden pl-1.5 font-['DejaVu_Sans_Condensed','DejaVu_Sans',sans-serif] text-[20px] font-bold whitespace-pre text-[#dcd8d0]">
				NQ-201406-GLOBEX [CB] [M]  2 Min   #11  L:1   E-Mini Nasdaq 100 - GLOBEX   NQ_OF
			</h2>
			<button aria-label="Minimize" className={btn}>
				<svg width="20" height="20"><rect x="4" y="15" width="10" height="4" /></svg>
			</button>
			<button aria-label="Maximize" className={btn}>
				<svg width="20" height="20"><path d="M1 2H19V18H1Z" fill="none" stroke="#000" strokeWidth="2" /><rect y="0" width="20" height="4" /></svg>
			</button>
			<button aria-label="Close" className={`ml-1 ${btn}`}>
				<svg width="18" height="18"><path d="M2 2L16 16M16 2L2 16" stroke="#000" strokeWidth="4" /></svg>
			</button>
		</header>
	);
}

function VolumeTable() {
	const ask = ["122", "-148", "63", "-15", "-239", "124", "0", "2", "-25"];
	const vol = ["856", "810", "503", "443", "851", "842", "362", "196", "175"];
	const tone = (v: string) => (v === "0" ? "text-[#8c7810]" : v[0] === "-" ? "text-[#ff2414]" : "text-[#0ac828]");
	return (
		<table className="absolute inset-x-0 bottom-1 w-full table-fixed bg-black text-center text-2xl leading-[22px]">
			<colgroup>
				<col className="w-[15.7%]" />
				{ask.map((_, i) => <col key={i} className="w-[7.65%]" />)}
				<col />
			</colgroup>
			<tbody>
				<tr>
					<th className="text-left font-normal text-[#0ac828]">AskV - BidV:</th>
					{ask.map((v, i) => <td key={i} className={tone(v)}>{v}</td>)}
					<td />
				</tr>
				<tr className="text-[#f0f0f0]">
					<th className="text-left font-normal">Total Vol:</th>
					{vol.map((v, i) => <td key={i}>{v}</td>)}
					<td />
				</tr>
			</tbody>
		</table>
	);
}

function OrderFlow() {
	const hours = ["10:48", "10:50", "10:52", "10:54", "10:56", "10:58", "11:00", "11:02", "11:04", "11:06", "11:08", "11:10"];
	return (
		<Frame title={<WindowTitle />}>
			<div className="flex min-h-0 flex-1 flex-col bg-[#040434]">
				<div className="flex min-h-0 flex-[1210]">
					<div className="relative min-w-0 flex-1">
						<Drawing box={flow}>
							<Lines
								stroke="#7c7c7c"
								dash="38 12 58 12"
								paths={[
									"124,311 205,304 285,298 370,290 456,272 540,265 620,260 700,257 775,250 840,245 880,241 975,240 1035,237 1170,237 1200,240 1580,240 1950,241 1960,244 2055,244",
									"124,926 240,921 340,914 400,906 500,893 570,887 650,885 740,880 830,877 910,872 1000,868 1370,868 1400,862 2055,863",
									"122,2166 300,2158 420,2146 700,2134 900,2124 1200,2116 1400,2110 2055,2104",
								]}
							/>
							<Lines stroke="#00d8e8" paths={["30,1397 2149,1397"]} />
							<Lines stroke="#8a8a8a" width={4} paths={["121,1545 195,1543 260,1537 370,1528 510,1517 700,1509 900,1501 1100,1498 1380,1491 1519,1487 2055,1486"]} />
							{strips.map(([from, to, color], i) =>
								Array.from({ length: to - from + 1 }, (_, r) => (
									<rect key={`${i}-${r}`} x={29 + 192.7 * i} y={rowY(from + r) - 33} width="17" height="60" fill={color} />
								)),
							)}
							{[16, 17, 18].map((r) => <rect key={r} x="2176" y={rowY(r) - 32} width="3" height="58" fill="#fff" />)}
							{footprint.map((col, i) => (
								<rect key={i} x={colX(i) - 85} y={rowY(col.box) - 33} width="165" height="62" fill="none" stroke="#e8e01c" strokeWidth="2" vectorEffect="non-scaling-stroke" />
							))}
						</Drawing>
						<FlowNumbers />
						<ChartHead trade="Trade: 1@3789.50">
							<span>NQ-201406-GLOBEX [CB] [M]  2 Min   #11</span>
							<Chip tone={white}>C=3793.25</Chip>
							<span>T=124</span>
							<Chip tone={red}>Chg=-0.50</Chip>
							<Chip tone={red}>DChg=-4.75</Chip>
							<span>2014-06-09 11:09:38 H=3794.00 L=3792.75</span>
						</ChartHead>
					</div>
					<div className="flex w-[288px] shrink-0 text-2xl leading-8">
						<div className="w-[75px] border-x-2 border-[#0aa01c] text-center text-[#0aa01c]">Buy</div>
						<svg className="h-full flex-1">
							{series(3797.5, 0.5, 200, 129.2, 18, 2).map(([text, y]) => (
								<text key={text} x="24" y={pct(y, flow[1], flow[3])} fill="#f0f0f0" dominantBaseline="central">{text}</text>
							))}
							<svg x="22" y={pct(1299, flow[1], flow[3])} className="overflow-visible">
								<rect y="-15" width="90" height="30" fill="#fff" />
								<text x="2" fill="#040434" dominantBaseline="central">3793.25</text>
							</svg>
						</svg>
						<div className="w-[76px] border-x-2 border-[#d4200f] text-center text-[#d4200f]">Sell</div>
					</div>
				</div>
				<div className="flex min-h-0 flex-[227]">
					<div className="relative min-w-0 flex-1 border-r-2 border-b-2 border-white">
						<Drawing box={deltaBox}>
							<Candles data={deltaBars} x0={64} dx={97.9} width={56} theme="deep" />
						</Drawing>
						<p className="flex gap-3 overflow-hidden pl-2 text-2xl leading-8 whitespace-nowrap text-[#f0f0f0]">
							<span>Ask/Bid Volume Difference Bars</span>
							<span className="text-[#00e82c]">Open: 0</span>
							<span className="text-[#0a8c14]">High: 13</span>
							<span className="text-[#ff2414]">Low: -56</span>
							<span className="text-[#901008]">Close: -25</span>
							<span>()</span>
						</p>
						<VolumeTable />
					</div>
					<PriceAxis box={deltaBox} labels={[["0", 363]]} className="w-[288px]" />
				</div>
				<TimeAxis box={deltaBox} labels={hours.map((h, i) => [h, 64 + 97.9 * i])} badge="58 L E" axis="w-[288px]" />
			</div>
			<HScroll />
		</Frame>
	);
}

function StripWindow() {
	const cols = [["7", "217", "11:00"], ["-26", "228", "11:02"], ["-14", "146", "11:04"], ["30", "130", "11:06"], ["-4", "94", "11:08"]];
	return (
		<section className="flex min-h-0 flex-col overflow-hidden border-r-2 border-b-2 border-[#686868] bg-[#f4f4f4] px-1.5 pb-1">
			<div className="flex min-h-0 flex-1 flex-col bg-[#152600] text-2xl text-[#f0f0f0]">
				<div className="mr-[262px] flex min-h-0 flex-1 items-end justify-end overflow-hidden border-r-2 border-b-2 border-white bg-black pr-[106px]">
					<table className="table-fixed text-center leading-[26px]">
						<tbody>
							<tr>
								{cols.map(([v]) => <td key={v} className={`w-28 ${v[0] === "-" ? "text-[#ff2414]" : "text-[#0ac828]"}`}>{v}</td>)}
							</tr>
							<tr>{cols.map((c) => <td key={c[1]}>{c[1]}</td>)}</tr>
						</tbody>
					</table>
				</div>
				<div className="flex h-[38px] shrink-0 items-start justify-end">
					{cols.map((c) => (
						<span key={c[2]} className="flex w-28 flex-col items-center leading-[30px]">
							<i className="h-1.5 w-0.5 bg-white" />
							{c[2]}
						</span>
					))}
					<span className="flex w-[370px] justify-end pt-1.5">
						<b className="bg-[#00c820] px-1.5 leading-[30px] font-normal text-white">55 L E</b>
					</span>
				</div>
			</div>
			<HScroll />
		</section>
	);
}

function TickChart() {
	const box: Box = [-1370, 365, 2758, 793];
	return (
		<Chart
			box={box}
			axis="w-[68px]"
			badge="6 L E"
			prices={[["800", 541], ["400", 674], ["-400", 938], ["-800", 1070]]}
			last={["62", 787]}
			times={[["9:12", 13], ["9:22", 123], ["9:32", 233], ["9:42", 343], ["9:52", 452], ["10:04", 584], ["10:16", 716], ["10:28", 848], ["10:40", 980], ["10:52", 1112], ["11:04", 1243]]}
			head={
				<div className="absolute inset-x-0 top-0 flex justify-end gap-2 overflow-hidden bg-[#040434] text-2xl leading-[30px] whitespace-pre text-[#f0f0f0]">
					<span>TICK-NYSE [M]  2 Min   #9</span>
					<Chip tone={white}>C=62</Chip>
					<span>T=2</span>
					<Chip tone={red}>Chg=-135</Chip>
					<Chip tone={white}>DChg=0</Chip>
					<span>2014-06-09 11:09:38 H=287 L=-35 O=197 V=372 B=0 A=0  </span>
				</div>
			}
			drawing={
				<>
					<Lines paths={["-1377,541 1384,541", "-1377,1070 1384,1070"]} stroke="#ff2414" />
					<Lines paths={["-1377,674 1384,674", "-1377,938 1384,938"]} stroke="#0a9c1c" />
					<Candles data={tickCandles} x0={13} dx={21.97} width={13} theme="deep" />
					<Lines paths={["-1377,805 1388,805"]} stroke="#fff" />
				</>
			}
		/>
	);
}

/* ---------- order entry panels ---------- */

function FauxSelect({ label, value, className }: { label: string; value: string; className: string }) {
	return (
		<div className={`relative bg-white ${sunken} ${className}`}>
			<select aria-label={label} className="h-full w-full appearance-none bg-transparent pl-1.5 text-black">
				<option>{value}</option>
			</select>
			<span className={`pointer-events-none absolute inset-y-0 right-0 flex w-[31px] ${bevel}`}><Arrow dir="down" /></span>
		</div>
	);
}

function Tick({ id, label, on }: { id: string; label: string; on?: boolean }) {
	return (
		<div className="flex items-center">
			<span className="relative">
				<input id={id} type="checkbox" defaultChecked={on} className={`peer block size-[23px] appearance-none bg-white ${sunken}`} />
				<svg width="19" height="19" className="pointer-events-none absolute top-1 left-1 hidden peer-checked:block">
					<path d="M2 6L6 11L13 2" fill="none" stroke="#000" strokeWidth="4" />
				</svg>
			</span>
			<label htmlFor={id} className="pl-4">{label}</label>
		</div>
	);
}

function OrderPanel({ id, title, active }: { id: string; title: string; active?: boolean }) {
	const tab = "border-t-2 border-r-[3px] border-t-white border-r-[#6a6a6a]";
	const action = "text-[22px] font-bold font-['Liberation_Sans',sans-serif] text-black";
	return (
		<section className="flex w-[448px] flex-col bg-[#f2f2f2] font-['DejaVu_Sans',sans-serif] text-[21px] text-black shadow-[0_0_6px_#0008]">
			<header className={`flex h-8 shrink-0 items-center gap-3.5 pl-3 ${active ? "bg-gradient-to-b from-[#e8e8e8] to-[#c4c4c4] text-[#303030]" : "bg-[#f6f6f6] text-[#8a8a8a]"}`}>
				{["Close", "Minimize", "Zoom"].map((name, i) => (
					<button key={name} aria-label={name} className={`size-[22px] rounded-full border-2 ${active ? (i === 0 ? "border-[#a83830] bg-gradient-to-b from-[#f88078] to-[#e84038]" : "border-[#888] bg-gradient-to-b from-[#a8a8a8] to-[#dedede]") : "border-[#bcbcbc] bg-[#f0f0f0]"}`} />
				))}
				<span className="font-['Open_Sans',sans-serif] text-[23px] whitespace-nowrap">{title}</span>
			</header>
			<FauxSelect label={`${id} strategy`} value="1_knt pevny SL" className="mt-0.5 h-10" />
			<p className="mx-1 mt-1.5 h-9 border-2 border-[#a0a0a0] border-r-white border-b-white bg-[#60d464] pl-0.5 leading-8">Qty: 1 Target/Stops Match</p>
			<nav className="mt-3 flex h-11 items-end border-b-2 border-white leading-9">
				<button className={`h-11 w-[86px] bg-[#e9e9e9] ${tab}`}>Main</button>
				<button className={`h-10 w-[103px] ${tab}`}>Targets</button>
				<button className={`ml-1 h-10 w-14 ${tab}`}>Set</button>
				<button className={`ml-1 h-10 w-9 ${tab}`}>C</button>
			</nav>
			<div className="mt-[17px] flex pl-[27px]">
				<div className="flex w-[231px] flex-col gap-[13px]">
					<div>
						<label htmlFor={`${id}-pos`} className="block h-[37px] leading-[38px]">Pos Qty@Price:</label>
						<input id={`${id}-pos`} defaultValue="Flat" className={`h-9 w-full bg-white pl-0.5 ${sunken}`} />
					</div>
					<input aria-label="Open profit" defaultValue="P/L: 0t" className={`h-9 bg-white pl-0.5 ${sunken}`} />
					<input aria-label="Daily profit" defaultValue="DailyPL: 0t" className={`h-9 bg-white pl-0.5 ${sunken}`} />
					<FauxSelect label={`${id} account`} value="U1049492" className="h-11" />
				</div>
				<div className="ml-1.5 grid grid-cols-2 gap-x-3 gap-y-0.5">
					{["MKT", "ASK", "BID"].map((kind) => ["BUY", "SELL"].map((side) => (
						<button key={side + kind} className={`h-[76px] w-[78px] border-2 border-t-white border-l-white border-r-[#6a6a6a] border-b-[#6a6a6a] leading-7 ${action} ${side === "BUY" ? "bg-[#94fa98]" : "bg-[#ff9490]"}`}>
							{side}<br />{kind}
						</button>
					)))}
				</div>
			</div>
			<div className={`mt-2.5 flex h-[59px] shrink-0 gap-0.5 pl-3 ${action}`}>
				<button className={`w-[129px] ${bevel} bg-[#ff9458]!`}><u>F</u>latten</button>
				<button className={`w-[135px] ${bevel} bg-[#ff9458]!`}><u>R</u>everse</button>
				<button className={`ml-0.5 w-[116px] ${bevel} bg-[#a2a2a2]!`}><span className="bg-[#ff9458] py-0.5">Cancel<u>A</u>ll</span></button>
				<button className={`w-[38px] ${bevel}`}>M</button>
			</div>
			<div className="mt-4 grid h-[51px] w-[438px] shrink-0 grid-cols-5 gap-2 pl-3">
				{["1", "2", "4", "5", "8"].map((n) => (
					<button key={n} className={n === "1" ? `bg-[#f0f0f0] ${sunken}` : bevel}>{n}</button>
				))}
			</div>
			<div className="mt-7 flex gap-5 pl-[31px] whitespace-nowrap">
				<Tick id={`${id}-attached`} label="Use Attached Orders" on />
				<Tick id={`${id}-chase`} label="Chase" />
			</div>
		</section>
	);
}

/* ---------- menu, toolbar, tabs ---------- */

const menus = [["", "F", "ile"], ["", "E", "dit"], ["", "C", "hart"], ["", "A", "nalysis"], ["", "T", "ools"], ["S", "p", "readsheet"], ["Tra", "d", "e"], ["", "G", "lobal Settings"], ["", "W", "indow"], ["C", "B", ""], ["CW", "", ""], ["Hel", "p", ""]];

function Glyph({ children }: { children: ReactNode }) {
	return (
		<svg width="44" height="40" fill="none" stroke="#000" strokeWidth="2">
			{children}
		</svg>
	);
}

const wideBars = "M7 1V39M2 5H7M7 34H11M37 1V39M32 5H37M37 34H41";
const tightBars = "M18 1V39M13 5H18M18 34H22M27 1V39M23 5H27M27 34H32";

const icons: Record<string, ReactNode> = {
	spread: <Glyph><path d={wideBars} /><path d="M10 20H34M15 15L10 20L15 25M29 15L34 20L29 25" /></Glyph>,
	spreadBold: <Glyph><path d={wideBars} /><path d="M15 20H29" strokeWidth="4" /><path d="M11 20L18 13V27ZM33 20L26 13V27Z" fill="#000" /></Glyph>,
	squeeze: <Glyph><path d={tightBars} /><path d="M1 20H14M9 14L15 20L9 26M43 20H31M36 14L30 20L36 26" /></Glyph>,
	squeezeBold: <Glyph><path d={tightBars} /><path d="M1 20H9M44 20H36" strokeWidth="4" /><path d="M14 20L8 14V26ZM31 20L37 14V26Z" fill="#000" /></Glyph>,
	pointer: <svg width="30" height="40"><path d="M6 3V28L11 24L17 37L23 36L17 23L23 22Z" fill="#fff" stroke="#000" strokeWidth="2" /></svg>,
	cross: <svg width="52" height="44" className="ml-1" fill="none" stroke="#000" strokeWidth="2"><path d="M1 22H51" strokeWidth="3" /><path d="M25 2V42M19 16H31V29H19Z" /></svg>,
	box: <svg width="52" height="24" className="ml-3"><rect x="1" y="2" width="51" height="20" fill="#fff" /><path d="M52 2H1V22H52" fill="none" stroke="#000" strokeWidth="3" /></svg>,
	line: <svg width="62" height="44"><path d="M0 16H62" stroke="#000" strokeWidth="2" /></svg>,
	trend: <Glyph><path d="M11 32L33 12" /><path d="M4 32H11V39H4ZM32 4H39V11H32Z" fill="#fff" /></Glyph>,
	grid: (
		<svg width="56" height="50">
			<text x="2" y="9" fontSize="11" className="font-bold">TVW</text>
			<path d="M3 12H29V46H3Z" fill="#000" />
			<path d="M3 18H29M3 24H29M3 30H29M3 36H29M3 41H29M9 18V46M16 18V46M23 18V46" stroke="#fff" />
			<path d="M28 30H54M42 18V43" stroke="#000" strokeWidth="2" />
		</svg>
	),
};

const tools = [
	["FS", "OC", "Sv", "CC"],
	["DTS", "Con", "Dis"],
	["spread", "spreadBold", "squeeze", "squeezeBold", "CS", "SW"],
	["pointer", "cross", "box", "DVP", "line", "trend", "abc", "TC 1", "TC 2"],
	["Rpl", "CVW", "grid", "CTV"],
	["Log", "TOP"],
	["Dly", "We", "1M", "5M", "10M", "30M", "1H", "UES", "TSM"],
];

function Toolbar() {
	return (
		<div className="flex h-[72px] border-y-2 border-[#a0a0a0]">
			<div className="flex items-center gap-2 border-r-2 border-[#b4b4b4] px-2.5">
				{tools.map((group) => (
					<div key={group[0]} className="flex">
						{group.map((name) => {
							const off = name === "Con" || name.startsWith("TC ");
							const down = name === "pointer" || name === "UES";
							return (
								<button key={name} aria-label={name} className={`flex h-14 w-[70px] items-center justify-center pb-1 text-[22px] whitespace-nowrap ${name === "abc" ? "text-[#40406a]" : "font-bold"} ${off ? "text-[#a4a4a4]" : ""} ${down ? `bg-[#f0f0f0] ${sunken}` : bevel}`}>
									{icons[name] ?? name}
								</button>
							);
						})}
					</div>
				))}
			</div>
		</div>
	);
}

function BottomTabs() {
	const tabs = ["ES-201406-GLOBEX [CB] [M]  2 Min   #2  L:1", "TICK-NYSE [M]  2 Min   #10  L:1", "NQ-201406-GLOBEX [CB] [M]  2 Min   #11  L:1", "YM-201406-ECBOT [CB] [M]  2 Min   #3  L:1", "NQ-201406-GLOBEX [CB] [M]  2 Min   #4  L:1", "EMD-201406-GLOBEX [CB] [M]  2 Min   #6  L:1", "TICK-NYSE [M]  2 Min   #9  L:1"];
	return (
		<nav className="flex h-[42px] shrink-0 gap-1 overflow-hidden border-t-2 border-[#686868] pb-1 pl-0.5">
			{tabs.map((t, i) => (
				<button key={t} className={`px-2.5 text-left font-['DejaVu_Sans',sans-serif] text-[19px] whitespace-pre ${i === 2 ? "bg-[#0a347c] pb-1 text-white" : "border-r-2 border-b-2 border-l-2 border-[#6a6a6a] border-l-white pt-1"} ${i === 4 || i === 5 ? "min-w-[514px]" : ""}`}>
					{t}
				</button>
			))}
		</nav>
	);
}

export default function App() {
	return (
		<div className="relative flex h-screen flex-col overflow-hidden bg-[#e8e8e8] font-['Liberation_Sans',Arial,sans-serif] text-black">
			<nav className="flex h-[38px] shrink-0 items-center gap-[25px] pt-1.5 pl-[11px] font-['DejaVu_Sans',sans-serif] text-[19px]">
				{menus.map(([a, b, c]) => (
					<button key={a + b + c}>{a}<u>{b}</u>{c}</button>
				))}
			</nav>
			<Toolbar />
			<div className="mt-2 flex h-8 shrink-0 gap-1 pl-4 font-['DejaVu_Sans',sans-serif] text-[19px] leading-8">
				<p className={`flex-[3084] pl-1 ${sunken}`}>Pointer:</p>
				<p className={`flex-[736] bg-[#60f464] pl-1 leading-7 ${sunken}`}>DF:398252 ST:5</p>
			</div>
			<nav className="flex h-[42px] shrink-0 items-end gap-1 border-b-2 border-white pl-1 font-['DejaVu_Sans',sans-serif] text-[20px]">
				<button className="h-[37px] w-[205px] bg-[#0a347c] text-white">FIMS_Slava_hlavni</button>
				<button className="h-9 w-[195px] border-t-2 border-r-2 border-t-white border-r-[#6a6a6a]">FIMS_Slava_NQ30</button>
				<button className="h-9 w-[196px] border-t-2 border-r-2 border-t-white border-r-[#6a6a6a]">FIMS_Slava_YM30</button>
			</nav>
			<div className="mt-2.5 h-1 shrink-0 bg-[#686868]" />

			<main className="flex min-h-0 flex-1">
				<div className="grid min-w-0 flex-[1948] grid-cols-[minmax(0,952fr)_minmax(0,992fr)] grid-rows-[minmax(0,1068fr)_minmax(0,1035fr)] gap-y-0.5 pl-1">
					<YmChart />
					<NqChart />
					<EsChart />
					<EmdChart />
				</div>
				<div className="grid min-w-0 flex-[1856] grid-rows-[minmax(0,1568fr)_minmax(0,125fr)_minmax(0,408fr)] gap-y-0.5 pr-1 pl-2">
					<OrderFlow />
					<StripWindow />
					<TickChart />
				</div>
				<div className="flex w-9 shrink-0 flex-col items-start bg-[#f3f3f3] pr-1">
					<button aria-label="Scroll up" className={`h-[31px] w-8 ${bevel}`}><Arrow dir="up" /></button>
					<div className="flex-1" />
					<div className={`h-8 w-8 ${bevel}`} />
					<div className="flex-1" />
					<button aria-label="Scroll down" className={`h-[31px] w-8 ${bevel}`}><Arrow dir="down" /></button>
				</div>
			</main>
			<div className="mr-9 shrink-0 pl-1"><HScroll /></div>
			<div className="h-[15px] shrink-0" />
			<BottomTabs />

			<div className="absolute top-[74%] bottom-0 left-[50.83%] flex gap-0.5 overflow-hidden">
				<OrderPanel id="nq" title="NQ–201406–GLOBEX [CB] [..." />
				<OrderPanel id="ym" title="YM–201406–ECBOT [CB] [..." active />
			</div>
		</div>
	);
}
